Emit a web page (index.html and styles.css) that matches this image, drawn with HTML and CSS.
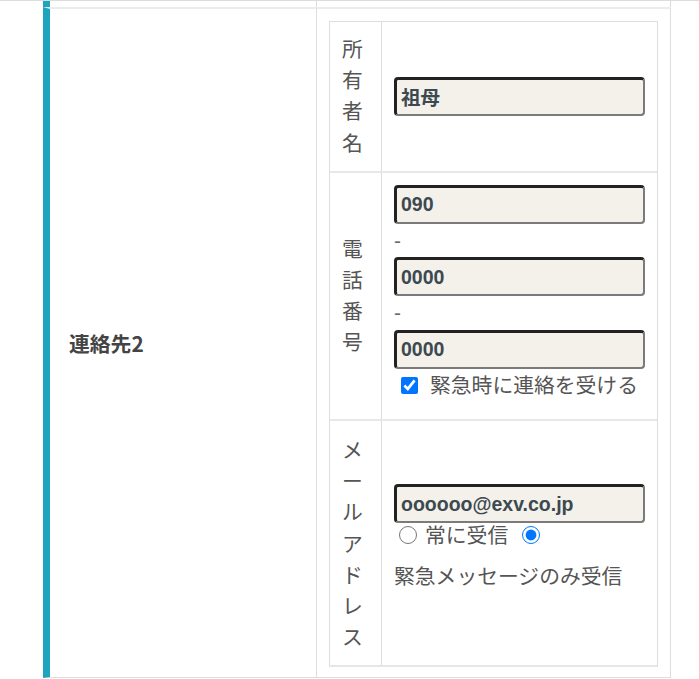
FILE: index.html
```html
<!DOCTYPE html>
<html lang="ja">
<head>
<meta charset="utf-8">
<title>連絡先2</title>
<link rel="stylesheet" href="styles.css">
</head>
<body>
<div class="top-rule"></div>
<table class="form-table">
  <tr class="tail-row">
    <th class="form-head tail-cell"></th>
    <td class="form-body tail-cell"></td>
  </tr>
  <tr class="main-row">
    <th class="form-head">連絡先2</th>
    <td class="form-body">
      <table class="sub-table">
        <tr class="sub-row">
          <th class="sub-label">所有者名</th>
          <td class="sub-field">
            <input class="text-input" type="text" value="祖母">
          </td>
        </tr>
        <tr class="sub-row sub-row-next">
          <th class="sub-label">電話番号</th>
          <td class="sub-field">
            <input class="text-input" type="text" value="090">
            <div class="sep">-</div>
            <input class="text-input" type="text" value="0000">
            <div class="sep">-</div>
            <input class="text-input" type="text" value="0000">
            <label class="check"><input class="check-box" type="checkbox" checked>緊急時に連絡を受ける</label>
          </td>
        </tr>
        <tr class="sub-row sub-row-next sub-row-last">
          <th class="sub-label">メールアドレス</th>
          <td class="sub-field">
            <input class="text-input" type="text" value="oooooo@exv.co.jp">
            <div class="radio-group">
              <label class="radio"><input class="radio-btn" type="radio" name="mail">常に受信</label><label class="radio radio-second"><input class="radio-btn" type="radio" name="mail" checked><span class="radio-text">緊急メッセージのみ受信</span></label>
            </div>
          </td>
        </tr>
      </table>
    </td>
  </tr>
</table>
</body>
</html>
```

FILE: styles.css
```css
html, body {
  margin: 0;
  padding: 0;
  background: #ffffff;
}

body {
  font-family: "Noto Sans CJK JP", "Liberation Sans", sans-serif;
  font-size: 20.8px;
  line-height: 31.2px;
  color: #555555;
}

.top-rule {
  height: 1px;
  background: #dcdcdc;
}

.form-table {
  border-collapse: separate;
  border-spacing: 0;
  table-layout: fixed;
  width: 628px;
  margin: 0 0 0 43px;
}

.tail-cell {
  height: 6px;
  padding: 0;
}

.form-head {
  box-sizing: border-box;
  width: 273px;
  border-left: 7px solid #1fa4c0;
  padding: 0 0 0 19px;
  text-align: left;
  vertical-align: middle;
  font-weight: bold;
  color: #444444;
}

.form-body {
  box-sizing: border-box;
  width: 355px;
  border-left: 1px solid #dddddd;
  border-right: 1px solid #dddddd;
  padding: 0;
}

.main-row .form-head,
.main-row .form-body {
  border-top: 2px solid #ececec;
  border-bottom: 1px solid #dddddd;
}

.main-row .form-body {
  padding: 12px 12px 10px;
}

.sub-table {
  width: 100%;
  border-collapse: separate;
  border-spacing: 0;
  table-layout: fixed;
  border-top: 1px solid #dddddd;
  border-left: 1px solid #dddddd;
  border-right: 1px solid #dddddd;
  border-bottom: 2px solid #e6e6e6;
}

.sub-label {
  box-sizing: border-box;
  width: 52px;
  padding: 11px 12px 13px;
  border-right: 1px solid #dddddd;
  text-align: left;
  vertical-align: middle;
  font-weight: normal;
  color: #555555;
}

.sub-row-last .sub-label {
  padding: 13px 12px;
}

.sub-field {
  padding: 12px;
  vertical-align: middle;
}

.sub-row-next .sub-label,
.sub-row-next .sub-field {
  border-top: 2px solid #e8e8e8;
}

.text-input {
  display: block;
  box-sizing: border-box;
  width: 100%;
  height: 39px;
  margin: 0;
  padding: 0 4px;
  border-style: solid;
  border-width: 3px 2px 2px 3px;
  border-color: #222222 #7b7b7b #7b7b7b #222222;
  border-radius: 4px;
  background: #f4f1ea;
  font-family: "Liberation Sans", "Noto Sans CJK JP", sans-serif;
  font-size: 19.5px;
  font-weight: bold;
  color: #3c4950;
  outline: none;
}

.sep {
  height: 33.5px;
  line-height: 33.5px;
  font-family: "Liberation Sans", sans-serif;
  color: #666666;
}

.check {
  display: block;
  margin-bottom: 7px;
}

.check-box {
  width: 17px;
  height: 17px;
  margin: 0 12px 0 7px;
  vertical-align: -1px;
}

.radio-group {
  line-height: 22px;
  margin-bottom: 11px;
}

.radio-btn {
  width: 18px;
  height: 18px;
  margin: 0 8px 0 5px;
  vertical-align: -1px;
}

.radio-second {
  margin-left: 9px;
}

.radio-text {
  display: block;
  margin-top: 15px;
  line-height: 31.2px;
}
```
